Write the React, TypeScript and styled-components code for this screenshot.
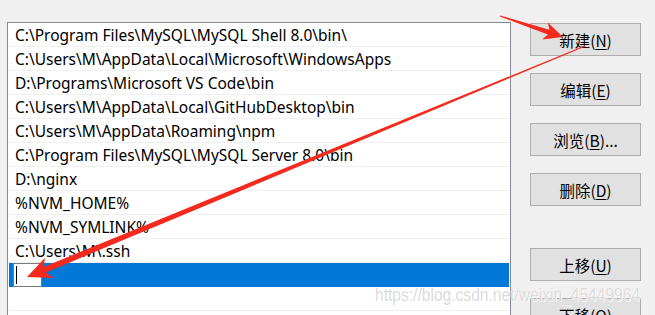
import React from 'react';
import styled, { createGlobalStyle } from 'styled-components';

const GlobalStyle = createGlobalStyle`
  html, body {
    margin: 0;
    padding: 0;
    background: #f0f0f0;
    overflow: hidden;
  }
`;

const Page = styled.div`
  position: relative;
  width: 655px;
  height: 315px;
  overflow: hidden;
  display: flex;
  align-items: flex-start;
  gap: 19px;
  padding: 22px 0 0 7px;
  box-sizing: border-box;
  font-family: 'Noto Sans', 'Noto Sans CJK SC', sans-serif;
`;

const ListBox = styled.div`
  width: 504px;
  height: 320px;
  flex-shrink: 0;
  box-sizing: border-box;
  border: 1px solid #828790;
  background: #ffffff;
  padding: 0 1px;
  display: flex;
  flex-direction: column;
`;

const Row = styled.div<{ $selected?: boolean }>`
  height: 24px;
  flex-shrink: 0;
  box-sizing: border-box;
  display: flex;
  align-items: center;
  padding-left: 6px;
  font-size: 15.5px;
  color: #000;
  white-space: nowrap;
  background: ${(p) => (p.$selected ? '#0078d7' : 'transparent')};
  border-bottom: 1px solid ${(p) => (p.$selected ? '#0078d7' : '#f0f0f0')};
`;

const EditBox = styled.div`
  width: 29px;
  height: 24px;
  margin-left: -2px;
  box-sizing: border-box;
  border: 1px solid #7a7a7a;
  background: #fff;
  display: flex;
  align-items: center;
  padding-left: 2px;
  align-self: flex-start;
`;

const Caret = styled.div`
  width: 1px;
  height: 18px;
  background: #000;
`;

const ButtonColumn = styled.div`
  display: flex;
  flex-direction: column;
  margin-top: 1px;
`;

const Button = styled.div<{ $gap: number }>`
  width: 111px;
  height: 33px;
  box-sizing: border-box;
  border: 1px solid #adadad;
  background: #e1e1e1;
  display: flex;
  align-items: center;
  justify-content: center;
  margin-bottom: ${(p) => p.$gap}px;
  font-family: 'Noto Sans CJK SC', sans-serif;
  font-size: 15.5px;
  color: #000;
  flex-shrink: 0;
`;

const Key = styled.span`
  text-decoration: underline;
  text-underline-offset: 2px;
`;

const Overlay = styled.svg`
  position: absolute;
  left: 0;
  top: 0;
  pointer-events: none;
`;

const Watermark = styled.div`
  position: absolute;
  left: 375px;
  top: 284px;
  font-family: 'Liberation Sans', Arial, sans-serif;
  font-size: 19px;
  color: rgba(210, 210, 210, 0.8);
  text-shadow: 0 0 1px #fff, 1px 1px 0 rgba(255, 255, 255, 0.8);
  white-space: nowrap;
  transform: scaleX(0.82);
  transform-origin: left center;
  pointer-events: none;
`;

const paths = [
  'C:\\Program Files\\MySQL\\MySQL Shell 8.0\\bin\\',
  'C:\\Users\\M\\AppData\\Local\\Microsoft\\WindowsApps',
  'D:\\Programs\\Microsoft VS Code\\bin',
  'C:\\Users\\M\\AppData\\Local\\GitHubDesktop\\bin',
  'C:\\Users\\M\\AppData\\Roaming\\npm',
  'C:\\Program Files\\MySQL\\MySQL Server 8.0\\bin',
  'D:\\nginx',
  '%NVM_HOME%',
  '%NVM_SYMLINK%',
  'C:\\Users\\M\\.ssh',
];

const buttons = [
  { label: '新建', key: 'N', gap: 17 },
  { label: '编辑', key: 'E', gap: 17 },
  { label: '浏览', key: 'B', gap: 17, tail: '...' },
  { label: '删除', key: 'D', gap: 42 },
  { label: '上移', key: 'U', gap: 17 },
  { label: '下移', key: 'O', gap: 0 },
];

// tapered arrow polygon from tail to tip
const arrow = (
  tx: number, ty: number, hx: number, hy: number,
  tailW: number, shaftW: number, headLen: number, headW: number
) => {
  const dx = hx - tx;
  const dy = hy - ty;
  const len = Math.hypot(dx, dy);
  const ux = dx / len;
  const uy = dy / len;
  const nx = -uy;
  const ny = ux;
  const bx = hx - ux * headLen;
  const by = hy - uy * headLen;
  const nbx = hx - ux * headLen * 0.8;
  const nby = hy - uy * headLen * 0.8;
  const pts = [
    [tx + nx * tailW / 2, ty + ny * tailW / 2],
    [nbx + nx * shaftW / 2, nby + ny * shaftW / 2],
    [bx + nx * headW, by + ny * headW],
    [hx, hy],
    [bx - nx * headW, by - ny * headW],
    [nbx - nx * shaftW / 2, nby - ny * shaftW / 2],
    [tx - nx * tailW / 2, ty - ny * tailW / 2],
  ];
  return pts.map((p) => `${p[0].toFixed(1)},${p[1].toFixed(1)}`).join(' ');
};

export default function App() {
  return (
    <>
      <GlobalStyle />
      <Page>
        <ListBox>
          {paths.map((p) => (
            <Row key={p}>{p}</Row>
          ))}
          <Row $selected>
            <EditBox>
              <Caret />
            </EditBox>
          </Row>
          <Row />
          <Row />
        </ListBox>
        <ButtonColumn>
          {buttons.map((b) => (
            <Button key={b.key} $gap={b.gap}>
              {b.label}(<Key>{b.key}</Key>){b.tail}
            </Button>
          ))}
        </ButtonColumn>
        <Watermark>https://blog.csdn.net/weixin_45449964</Watermark>
        <Overlay width="655" height="315" viewBox="0 0 655 315">
          <polygon points={arrow(500, 16, 563, 37, 1, 5, 19, 9)} fill="#f52a1e" />
          <polygon points={arrow(585, 46, 27, 277, 1, 6, 24, 11)} fill="#f52a1e" />
        </Overlay>
      </Page>
    </>
  );
}
